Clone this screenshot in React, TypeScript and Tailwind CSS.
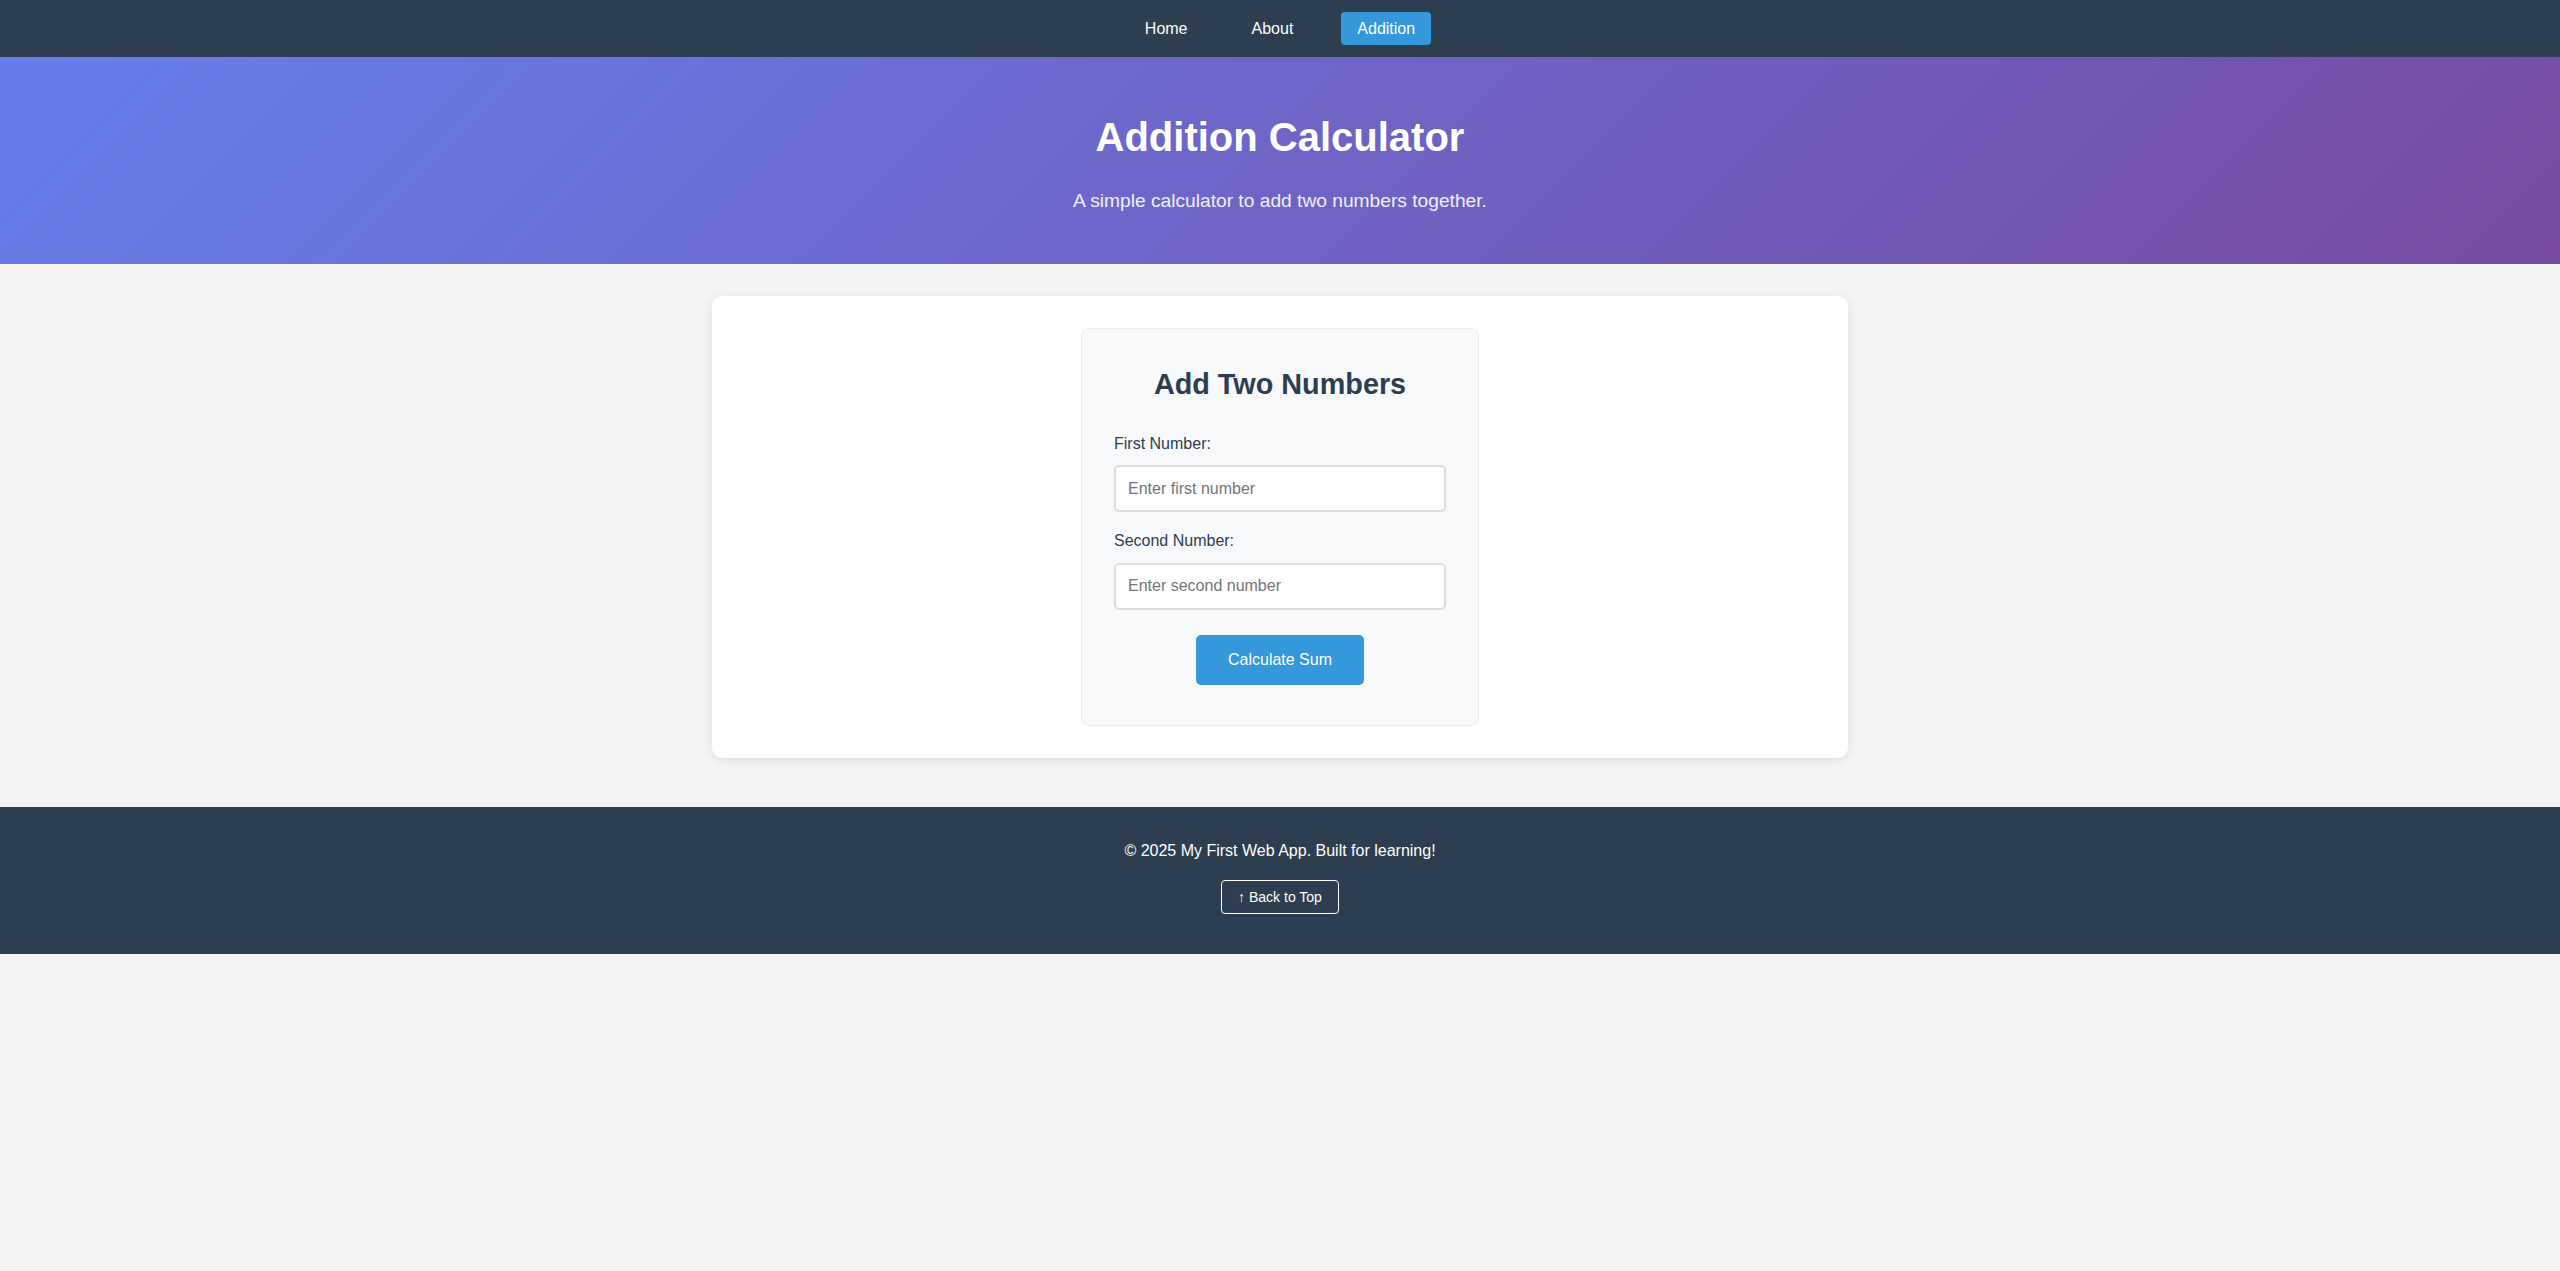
import { useState } from "react";

const Styles = {
  navLink: "h-[33px] px-4 rounded-[4px] text-white text-base leading-[33px]",
  label: "block mb-[9px] text-base leading-[25.6px] text-[#2c3e50]",
  input:
    "block w-full h-[47px] px-3 border-2 border-[#ddd] rounded-[5px] bg-white text-base text-[#333] placeholder:text-[#757575] outline-none",
};

function NavBar() {
  const links = ["Home", "About", "Addition"];
  return (
    <nav className="bg-[#2c3e50] py-3 flex justify-center gap-8">
      {links.map((link) => (
        <a
          key={link}
          href="#"
          className={`${Styles.navLink} ${link === "Addition" ? "bg-[#3498db]" : ""}`}
        >
          {link}
        </a>
      ))}
    </nav>
  );
}

function Hero() {
  return (
    <header className="bg-[linear-gradient(135deg,#667eea_0%,#764ba2_100%)] pt-12 pb-12 text-center text-white">
      <h1 className="text-[40px] leading-[64px] font-bold mb-[18px]">
        Addition Calculator
      </h1>
      <p className="text-[19.2px] leading-[28.8px] text-white/90">
        A simple calculator to add two numbers together.
      </p>
    </header>
  );
}

function Calculator() {
  const [first, setFirst] = useState("");
  const [second, setSecond] = useState("");

  return (
    <div className="w-[398px] mx-auto bg-[#f8f9fa] border border-[#e9ecef] rounded-[8px] px-8 pt-8 pb-10">
      <h2 className="text-[28.8px] leading-[46px] font-bold text-center text-[#2c3e50] mb-6">
        Add Two Numbers
      </h2>
      <div className="mb-4">
        <label className={Styles.label}>First Number:</label>
        <input
          type="number"
          value={first}
          onChange={(e) => setFirst(e.target.value)}
          placeholder="Enter first number"
          className={Styles.input}
        />
      </div>
      <div className="mb-[25px]">
        <label className={Styles.label}>Second Number:</label>
        <input
          type="number"
          value={second}
          onChange={(e) => setSecond(e.target.value)}
          placeholder="Enter second number"
          className={Styles.input}
        />
      </div>
      <div className="flex justify-center">
        <button className="bg-[#3498db] text-white text-base leading-[25.6px] py-3 px-8 rounded-[5px]">
          Calculate Sum
        </button>
      </div>
    </div>
  );
}

function Footer() {
  return (
    <footer className="bg-[#2c3e50] text-white text-center pt-[35px] pb-10">
      <p className="text-base leading-[18px] mb-5">
        © 2025 My First Web App. Built for learning!
      </p>
      <div className="flex justify-center">
        <a
          href="#"
          className="h-[34px] px-4 border border-white rounded-[4px] text-sm leading-[32px] text-white"
        >
          ↑ Back to Top
        </a>
      </div>
    </footer>
  );
}

export default function App() {
  return (
    <div className="min-h-screen bg-[#f4f4f4] font-['Liberation_Sans',Arial,sans-serif]">
      <NavBar />
      <Hero />
      <main className="max-w-[1200px] mx-auto px-8 pt-8 pb-[49px]">
        <div className="bg-white rounded-[10px] shadow-[0_2px_10px_rgba(0,0,0,0.1)] p-8">
          <Calculator />
        </div>
      </main>
      <Footer />
    </div>
  );
}
